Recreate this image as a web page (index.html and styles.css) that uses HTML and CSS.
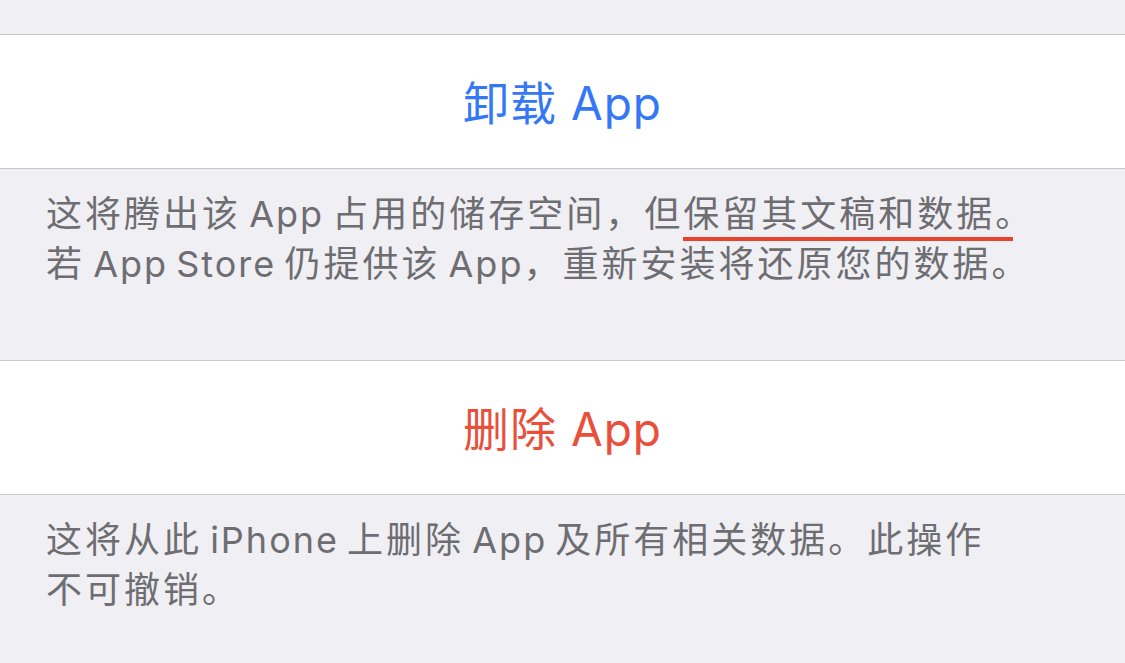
FILE: index.html
```html
<!DOCTYPE html>
<html lang="zh-CN">
<head>
  <meta charset="UTF-8" />
  <title>卸载 App</title>
  <link rel="stylesheet" href="styles.css">
</head>
<body>

<div class="spacer"></div>

<div class="action offload">卸载 App</div>
<div class="note note-first">
  这将腾出该<span class="en"> App </span>占用的储存空间，但<span class="mark">保留其文稿和数据</span>。<br>
  若<span class="en"> App Store </span>仍提供该<span class="en"> App</span>，重新安装将还原您的数据。
</div>

<div class="action delete">删除 App</div>
<div class="note">
  这将从此<span class="en"> iPhone </span>上删除<span class="en"> App </span>及所有相关数据。此操作<br>
  不可撤销。
</div>

</body>
</html>
```

FILE: styles.css
```css
body {
  margin: 0;
  background: #f0eff4;
  font-family: Inter, "Noto Sans CJK SC", "Noto Sans", sans-serif;
  overflow: hidden;
}
.spacer {
  height: 34px;
  border-bottom: 1px solid #c8c7cc;
}
.action {
  height: 134px;
  padding-bottom: 4px;
  box-sizing: border-box;
  background: #fff;
  border-bottom: 1px solid #c8c7cc;
  display: flex;
  align-items: center;
  justify-content: center;
  font-size: 46px;
  letter-spacing: 1px;
}
.offload {
  color: #3478f6;
}
.delete {
  color: #e8503c;
}
.note {
  padding: 20px 46px 0;
  color: #6d6d72;
  font-size: 36px;
  line-height: 50px;
  letter-spacing: 3px;
  word-spacing: -4px;
}
.note .en {
  letter-spacing: 2px;
}
.note-first {
  height: 171px;
  border-bottom: 1px solid #c8c7cc;
}
.mark {
  position: relative;
}
.mark::after {
  content: "";
  position: absolute;
  left: 0;
  right: -18px;
  bottom: -5px;
  height: 4px;
  background: #e8412c;
}
```
